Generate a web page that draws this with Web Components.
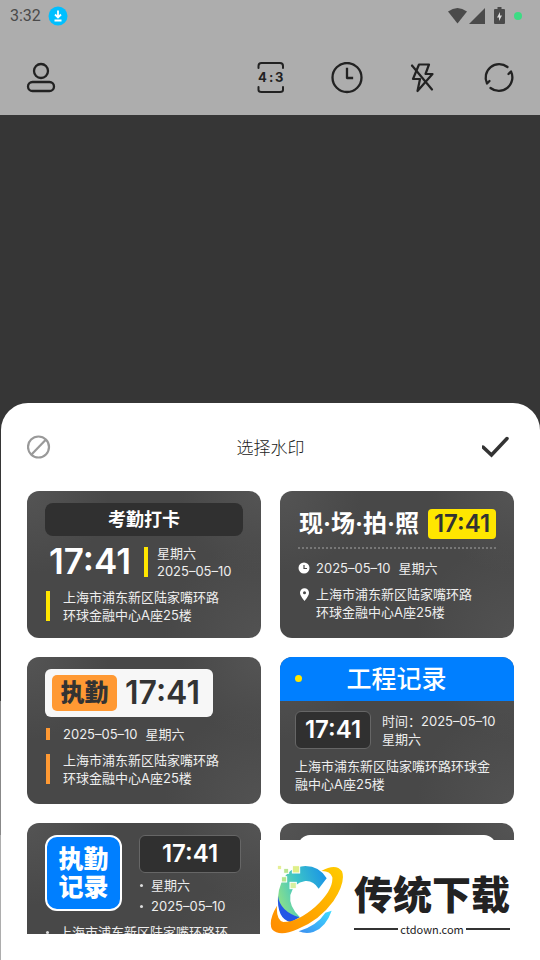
<!DOCTYPE html>
<html lang="zh-CN">
<head>
<meta charset="utf-8">
<meta name="viewport" content="width=device-width, initial-scale=1">
<title>选择水印</title>
<style>
  body {
    margin: 0;
    font-family: Inter, "Noto Sans CJK SC", sans-serif;
  }
</style>
</head>
<body>
<camera-app></camera-app>

<script>
const ADDRESS = "上海市浦东新区陆家嘴环路环球金融中心A座25楼";
const DATE = "2025–05–10";
const WEEKDAY = "星期六";
const TIME = "17:41";

class StatusBar extends HTMLElement {
  constructor() {
    super();
    this.attachShadow({ mode: "open" });
    this.shadowRoot.innerHTML = `
      <style>
        :host {
          display: flex;
          align-items: center;
          height: 32px;
          padding: 0 18px 0 10px;
          color: #4a4a4a;
          font: 16px/32px Roboto, sans-serif;
        }
        svg { display: block; }
        .badge { margin-left: 7px; }
        .right {
          display: flex;
          align-items: center;
          margin-left: auto;
        }
        .battery { margin: 0 9px 0 8px; }
        .dot {
          width: 8px;
          height: 8px;
          border-radius: 50%;
          background: #3ddc84;
        }
      </style>
      <span>3:32</span>
      <svg class="badge" width="20" height="20" viewBox="0 0 20 20">
        <circle cx="10" cy="10" r="9.5" fill="#00bfff"/>
        <path d="M10 4.5v7M7 8.500l3 3 3-3M6.500 14.500h7" fill="none" stroke="#fff" stroke-width="1.8"/>
      </svg>
      <div class="right">
        <svg width="38" height="18" viewBox="0 0 38 18" fill="currentColor">
          <path d="M0 4.5Q9.500-2.500 19 4.500L9.500 16.500z"/>
          <path d="M21 17L37 1v16z"/>
        </svg>
        <svg class="battery" width="11" height="18" viewBox="0 0 11 18">
          <path d="M3.500 0h4v2H10q1 0 1 1v13q0 1-1 1H1q-1 0-1-1V3q0-1 1-1h2.500z" fill="currentColor"/>
          <path d="M6 5L3 10.500h2V14l3-5.500H6z" fill="#d8d8d8"/>
        </svg>
        <span class="dot"></span>
      </div>`;
  }
}
customElements.define("status-bar", StatusBar);

class CameraToolbar extends HTMLElement {
  constructor() {
    super();
    this.attachShadow({ mode: "open" });
    this.shadowRoot.innerHTML = `
      <style>
        :host {
          display: flex;
          align-items: center;
          gap: 44px;
          height: 83px;
          padding: 8px 25px 0;
          box-sizing: border-box;
          color: #222;
        }
        button {
          padding: 0;
          border: 0;
          background: none;
          color: inherit;
          cursor: pointer;
        }
        button:first-of-type { margin-right: auto; }
        svg {
          display: block;
          fill: none;
          stroke: currentColor;
          stroke-width: 2.3;
          stroke-linecap: round;
          stroke-linejoin: round;
        }
        text {
          font: 700 13px Inter, sans-serif;
          fill: currentColor;
          stroke: none;
        }
      </style>
      <button aria-label="我的">
        <svg width="32" height="32" viewBox="0 0 32 32">
          <circle cx="16" cy="9" r="7"/>
          <rect x="3" y="20" width="26" height="9" rx="4.500"/>
        </svg>
      </button>
      <button aria-label="画面比例">
        <svg width="32" height="32" viewBox="0 0 32 32">
          <path d="M3.500 6V4q0-3 3-3h18.500q3 0 3 3v2M3.500 25v3q0 2 3 2h18.500q3 0 3-2v-3" stroke-width="2"/>
          <text x="3 14 20" y="20">4:3</text>
        </svg>
      </button>
      <button aria-label="定时">
        <svg width="32" height="32" viewBox="0 0 32 32">
          <circle cx="16" cy="15.500" r="14.500"/>
          <path d="M16 7v9h5" stroke-linecap="square"/>
        </svg>
      </button>
      <button aria-label="闪光灯">
        <svg width="32" height="32" viewBox="0 0 32 32">
          <path d="M12 2.500h10L18.500 12h7L10.500 29l2.500-12H6z" stroke-width="2.200"/>
          <path d="M5 3.500l20 24" stroke-width="2.200"/>
        </svg>
      </button>
      <button aria-label="切换镜头">
        <svg width="32" height="32" viewBox="0 0 32 32">
          <path d="M24.500 5A13.500 13.500 0 0 0 4 21.500l2.500-2.500"/>
          <path d="M7.500 26A13.500 13.500 0 0 0 28 9.500l-2.500 2.500"/>
        </svg>
      </button>`;
  }
}
customElements.define("camera-toolbar", CameraToolbar);

// dark tile that carries one watermark preview
class WatermarkCard extends HTMLElement {
  constructor() {
    super();
    this.attachShadow({ mode: "open" });
    this.shadowRoot.innerHTML = `
      <style>
        :host { display: block; }
        button {
          display: flex;
          flex-direction: column;
          justify-content: flex-start;
          align-items: stretch;
          width: 100%;
          height: 147px;
          padding: 0;
          border: 0;
          border-radius: 12px;
          overflow: hidden;
          color: #eee;
          font: inherit;
          text-align: left;
          background:
            radial-gradient(circle at 0 0, #545454, transparent 30%),
            radial-gradient(circle at 100% 0, #545454, transparent 30%),
            radial-gradient(circle at 100% 100%, #525252, transparent 35%),
            #484848;
          cursor: pointer;
        }
      </style>
      <button><slot></slot></button>`;
  }
  connectedCallback() {
    this.shadowRoot.querySelector("button").setAttribute("aria-label", this.getAttribute("label"));
  }
}
customElements.define("watermark-card", WatermarkCard);

// big clock, plain or in a box: <clock-face variant="box">
class ClockFace extends HTMLElement {
  constructor() {
    super();
    this.attachShadow({ mode: "open" });
    this.shadowRoot.innerHTML = `
      <style>
        :host {
          display: flex;
          align-items: center;
          justify-content: center;
          box-sizing: border-box;
          color: #fff;
          font-size: 24px;
          font-weight: 600;
          line-height: 1;
        }
        :host([variant="large"]) { font-size: 35px; }
        :host([variant="plate"]) { font-size: 32px; color: #333; }
        :host([variant="yellow"]) {
          width: 68px;
          height: 30px;
          border-radius: 4px;
          color: #333;
          background: #ffe600;
        }
        :host([variant="box"]) {
          height: 38px;
          border: 1px solid #666;
          border-radius: 6px;
          background: #303030;
        }
      </style>
      <span>${TIME}</span>`;
  }
}
customElements.define("clock-face", ClockFace);

// line of small text with a marker in front
class InfoRow extends HTMLElement {
  constructor() {
    super();
    this.attachShadow({ mode: "open" });
    this.shadowRoot.innerHTML = `
      <style>
        :host {
          display: flex;
          font-size: 13px;
          line-height: 18px;
        }
        .marker {
          flex: none;
          width: 18px;
          display: flex;
          align-items: center;
        }
        .marker::before {
          content: "";
          width: 4px;
          height: calc(100% - 6px);
          margin-left: 1px;
          background: var(--bar, none);
        }
        :host([marker="icon"]) .marker { align-items: flex-start; }
        :host([marker="icon"]) .marker::before,
        :host([marker="dot"]) .marker::before { display: none; }
        :host([marker="dot"]) .marker {
          width: var(--indent, 12px);
          align-items: flex-start;
        }
        :host([marker="dot"]) .marker::after {
          content: "";
          width: 3px;
          height: 3px;
          margin: 8px 0 0 1px;
          border-radius: 50%;
          background: #ddd;
        }
      </style>
      <span class="marker"><slot name="icon"></slot></span>
      <span><slot></slot></span>`;
  }
}
customElements.define("info-row", InfoRow);

class WatermarkGrid extends HTMLElement {
  constructor() {
    super();
    this.attachShadow({ mode: "open" });
    this.shadowRoot.innerHTML = `
      <style>
        :host {
          display: grid;
          grid-template-columns: repeat(2, minmax(0, 1fr));
          align-content: start;
          gap: 19px;
          overflow: hidden;
        }
        .body {
          display: flex;
          flex-direction: column;
          gap: 8px;
          padding: 12px 18px;
        }
        .row { display: flex; align-items: center; }
        .small {
          font-size: 13px;
          line-height: 18px;
          white-space: nowrap;
        }
        .gap { margin-left: 8px; }
        .yellow { --bar: #ffe600; }
        .orange { --bar: #ff9933; }
        .address { padding-right: 18px; }

        .banner {
          height: 33px;
          border-radius: 8px;
          background: #303030;
          color: #fff;
          font-size: 18px;
          font-weight: 700;
          line-height: 34px;
          text-align: center;
        }
        .stamp { padding-left: 4px; }
        .stamp .small {
          display: flex;
          align-items: center;
          gap: 9px;
          margin-left: 13px;
        }
        .stamp .small::before {
          content: "";
          width: 4px;
          height: 30px;
          background: #ffe600;
        }

        .scene { padding-top: 18px; }
        .scene .row {
          justify-content: space-between;
          padding-left: 1px;
        }
        .scene h3 {
          margin: 0;
          color: #fff;
          font-size: 24px;
          font-weight: 700;
          line-height: 30px;
          white-space: nowrap;
        }
        .scene hr {
          width: 100%;
          margin: 0 0 2px;
          border: 0;
          border-top: 2px dotted #777;
        }
        .scene svg { display: block; margin-top: 3px; }

        .plate {
          display: flex;
          align-items: center;
          align-self: flex-start;
          gap: 8px;
          height: 48px;
          padding: 0 13px 0 7px;
          box-sizing: border-box;
          border-radius: 6px;
          background: #f7f7f7;
        }
        .tag {
          width: 65px;
          height: 36px;
          border-radius: 5px;
          background: #ff9933;
          color: #333;
          font-size: 24px;
          font-weight: 900;
          line-height: 36px;
          text-align: center;
        }

        .project {
          display: flex;
          align-items: center;
          height: 44px;
          padding: 0 15px;
          background: #007fff;
          color: #fff;
          font-size: 25px;
          font-weight: 500;
          line-height: 44px;
        }
        .project::before {
          content: "";
          width: 7px;
          height: 7px;
          border-radius: 50%;
          background: #ffe600;
        }
        .project span {
          flex: 1;
          padding-right: 8px;
          text-align: center;
        }
        .project-body { padding: 10px 15px; }
        .project-body clock-face { width: 76px; margin-right: 11px; }
        .project-body .wrap { white-space: normal; }

        .duty {
          box-sizing: border-box;
          width: 77px;
          height: 76px;
          padding: 8px 0;
          border: 2px solid #fff;
          border-radius: 12px;
          background: #007fff;
          color: #fff;
          font-size: 25px;
          font-weight: 900;
          line-height: 28px;
          text-align: center;
        }
        .duty-top { display: flex; justify-content: space-between; gap: 17px; }
        .duty-top > :last-child { flex: 1; margin-right: 2px; }
        .duty-top info-row { margin-top: 3px; }
        .short { --indent: 14px; }
        .blank { flex: none; height: 60px; border-radius: 12px; background: #fff; }
      </style>

      <watermark-card label="考勤打卡">
        <div class="body">
          <div class="banner">考勤打卡</div>
          <div class="row stamp">
            <clock-face variant="large"></clock-face>
            <div class="small">
              <div>${WEEKDAY}<br>${DATE}</div>
            </div>
          </div>
          <info-row class="yellow address">${ADDRESS}</info-row>
        </div>
      </watermark-card>

      <watermark-card label="现场拍照">
        <div class="body scene">
          <div class="row">
            <h3>现·场·拍·照</h3>
            <clock-face variant="yellow"></clock-face>
          </div>
          <hr>
          <info-row marker="icon">
            <svg slot="icon" width="12" height="12" viewBox="0 0 12 12">
              <circle cx="6" cy="6" r="5.500" fill="#fff"/>
              <path d="M6 3v3.500h3" fill="none" stroke="#484848" stroke-width="1.200"/>
            </svg>
            <span>${DATE}</span><span class="gap">${WEEKDAY}</span>
          </info-row>
          <info-row marker="icon" class="address">
            <svg slot="icon" width="12" height="13" viewBox="0 0 12 13">
              <path d="M6.500 13C3.500 9.500 2 7 2 4.800a4.500 4.500 0 0 1 9 0C11 7 9.500 9.500 6.500 13z" fill="#fff"/>
              <circle cx="6.500" cy="4.800" r="1.500" fill="#484848"/>
            </svg>
            ${ADDRESS}
          </info-row>
        </div>
      </watermark-card>

      <watermark-card label="执勤">
        <div class="body">
          <div class="plate">
            <span class="tag">执勤</span>
            <clock-face variant="plate"></clock-face>
          </div>
          <info-row class="orange"><span>${DATE}</span><span class="gap">${WEEKDAY}</span></info-row>
          <info-row class="orange address">${ADDRESS}</info-row>
        </div>
      </watermark-card>

      <watermark-card label="工程记录">
        <div class="project"><span>工程记录</span></div>
        <div class="body project-body">
          <div class="row">
            <clock-face variant="box"></clock-face>
            <div class="small">时间：${DATE}<br>${WEEKDAY}</div>
          </div>
          <div class="small wrap">${ADDRESS}</div>
        </div>
      </watermark-card>

      <watermark-card label="执勤记录">
        <div class="body">
          <div class="duty-top">
            <div class="duty">执勤<br>记录</div>
            <div>
              <clock-face variant="box"></clock-face>
              <info-row marker="dot">${WEEKDAY}</info-row>
              <info-row marker="dot">${DATE}</info-row>
            </div>
          </div>
          <info-row marker="dot" class="short">上海市浦东新区陆家嘴环路环</info-row>
        </div>
      </watermark-card>

      <watermark-card label="空白">
        <div class="body"><div class="blank"></div></div>
      </watermark-card>`;
  }
}
customElements.define("watermark-grid", WatermarkGrid);

class WatermarkSheet extends HTMLElement {
  constructor() {
    super();
    this.attachShadow({ mode: "open" });
    this.shadowRoot.innerHTML = `
      <style>
        :host {
          display: flex;
          flex-direction: column;
          min-height: 0;
          margin-left: 1px;
          padding: 0 26px 26px;
          border-radius: 27px 27px 0 0;
          background: #fff;
        }
        header {
          flex: none;
          display: flex;
          align-items: center;
          justify-content: space-between;
          height: 88px;
        }
        h2 {
          margin: 0;
          color: #222;
          font-size: 17px;
          font-weight: 300;
        }
        button {
          display: flex;
          width: 32px;
          padding: 0;
          border: 0;
          background: none;
          cursor: pointer;
        }
        button:last-child { justify-content: flex-end; }
        svg { fill: none; }
        watermark-grid { flex: 1; min-height: 0; }
      </style>
      <header>
        <button aria-label="不使用水印">
          <svg width="24" height="24" viewBox="0 0 24 24" stroke="#999" stroke-width="2.200">
            <circle cx="11.500" cy="12" r="10.500"/>
            <path d="M4.500 19.500L19 4.500"/>
          </svg>
        </button>
        <h2>选择水印</h2>
        <button aria-label="确定">
          <svg width="32" height="24" viewBox="0 0 32 24" stroke="#333" stroke-width="3.500" stroke-linecap="round">
            <path d="M1 12l8.500 8L25 3.500"/>
          </svg>
        </button>
      </header>
      <watermark-grid></watermark-grid>`;
  }
}
customElements.define("watermark-sheet", WatermarkSheet);

class SiteBadge extends HTMLElement {
  constructor() {
    super();
    this.attachShadow({ mode: "open" });
    this.shadowRoot.innerHTML = `
      <style>
        :host {
          display: flex;
          align-items: center;
          gap: 10px;
          width: 280px;
          height: 120px;
          padding: 0 30px 0 10px;
          box-sizing: border-box;
          background: #fff;
          color: #222;
        }
        svg { flex: none; display: block; }
        .name {
          font: 900 39px/58px "Noto Sans CJK SC", sans-serif;
          white-space: nowrap;
        }
        .site {
          display: flex;
          align-items: center;
          gap: 2px;
          font: 400 11px/16px "Noto Sans CJK SC", sans-serif;
        }
        .site::before, .site::after {
          content: "";
          flex: 1;
          height: 2px;
          background: #333;
        }
      </style>
      <svg width="74" height="70" viewBox="42 165 222 210">
        <defs>
          <linearGradient id="ring" x1="0" y1="1" x2="1" y2="0">
            <stop offset="0" stop-color="#ff8a00"/>
            <stop offset="1" stop-color="#ffcc00"/>
          </linearGradient>
          <linearGradient id="arc" x1="0" y1="0.600" x2="1" y2="0.200">
            <stop offset="0" stop-color="#8be08a"/>
            <stop offset="0.450" stop-color="#3cc4c8"/>
            <stop offset="1" stop-color="#1a94e6"/>
          </linearGradient>
          <linearGradient id="foot" x1="0" y1="1" x2="1" y2="0">
            <stop offset="0" stop-color="#3b8ef0"/>
            <stop offset="1" stop-color="#3fdcff"/>
          </linearGradient>
        </defs>
        <path d="M212 205Q190 168 148 168Q98 170 76 218Q58 262 72 304Q82 330 104 336L132 322Q98 290 103 255Q112 218 148 213Q172 211 188 236z" fill="url(#arc)"/>
        <path d="M66 258Q72 304 130 322L104 337Q62 326 66 258z" fill="#2457e6"/>
        <path d="M227 302Q210 352 172 366Q150 373 128 364Q185 345 208 308z" fill="url(#foot)"/>
        <path d="M196 183Q240 158 258 184Q270 216 232 274Q190 332 124 358Q70 382 48 358Q36 332 63 287Q60 330 82 336Q125 336 178 290Q232 240 229 202Q222 182 196 183z" fill="url(#ring)"/>
        <g stroke="#fff" stroke-width="3">
          <rect x="64" y="166" width="13" height="13" fill="#e6ef96"/>
          <rect x="83" y="175" width="15" height="15" fill="#b9e58f"/>
          <rect x="109" y="167" width="22" height="22" fill="#dfef88"/>
          <rect x="76" y="200" width="16" height="16" fill="#b4e68f"/>
          <rect x="102" y="217" width="19" height="19" fill="#d6f0a0"/>
        </g>
      </svg>
      <div>
        <div class="name">传统下载</div>
        <div class="site">ctdown.com</div>
      </div>`;
  }
}
customElements.define("site-badge", SiteBadge);

class CameraApp extends HTMLElement {
  constructor() {
    super();
    this.attachShadow({ mode: "open" });
    this.shadowRoot.innerHTML = `
      <style>
        :host {
          position: relative;
          display: flex;
          flex-direction: column;
          height: 100vh;
          overflow: hidden;
          background: linear-gradient(#363636 73%, #888 73%, #888 87%, #adadad 87%);
        }
        .top { flex: none; background: #adadad; }
        .viewfinder { flex: 13 0 0; }
        watermark-sheet { flex: 24 0 0; }
        /* badge floats over the lower corner of the sheet */
        site-badge {
          position: absolute;
          right: 0;
          bottom: 0;
        }
      </style>
      <div class="top">
        <status-bar></status-bar>
        <camera-toolbar></camera-toolbar>
      </div>
      <div class="viewfinder"></div>
      <watermark-sheet></watermark-sheet>
      <site-badge></site-badge>`;
  }
}
customElements.define("camera-app", CameraApp);
</script>
</body>
</html>
